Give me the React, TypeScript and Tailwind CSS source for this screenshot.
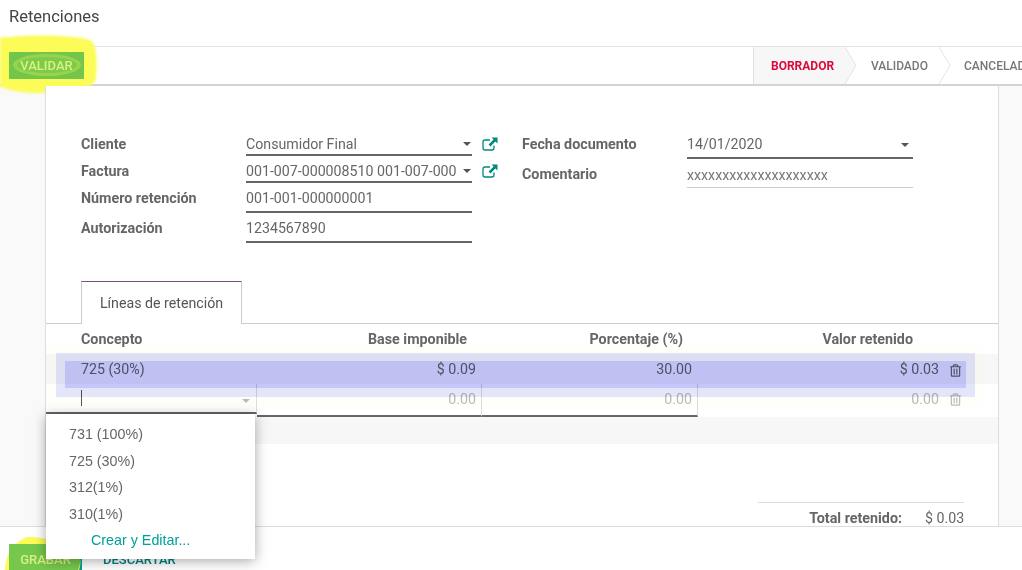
import { FaRegTrashAlt } from 'react-icons/fa';

const caret = 'w-0 h-0 border-x-[4px] border-x-transparent border-t-[4px]';

function ExternalIcon() {
  return (
    <svg viewBox="0 0 16 14" className="w-[16px] h-[14px] shrink-0 text-[#00897f]" fill="none">
      <path d="M8 3H3a2 2 0 0 0-2 2v6a2 2 0 0 0 2 2h7a2 2 0 0 0 2-2V8.5" stroke="currentColor" strokeWidth="1.3" />
      <path d="M9.5.5H15.5V6.5L13.4 4.4 8.4 9.4 6.6 7.6 11.6 2.6Z" fill="currentColor" />
    </svg>
  );
}

function Field({ value, arrow, link, rowClass, fieldClass }: { value: string; arrow?: boolean; link?: boolean; rowClass: string; fieldClass: string }) {
  return (
    <div className={`flex items-start ${rowClass}`}>
      <div className={`w-[226px] flex border-b-2 border-[#666] box-content ${fieldClass}`}>
        <span className="flex-1 overflow-hidden whitespace-nowrap text-[#666] leading-[20px] mr-[7px]">{value}</span>
        {arrow && <span className={`${caret} border-t-[#555] mr-[1px] self-center`} />}
      </div>
      {link && <span className="ml-[10px] mt-[5px]"><ExternalIcon /></span>}
    </div>
  );
}

function Step({ label, active, boxClass }: { label: string; active?: boolean; boxClass: string }) {
  return (
    <div className={`relative h-full flex items-center shrink-0 ${boxClass} ${active ? 'bg-[#f7f7f7]' : ''}`}>
      <span className={`text-[12px] whitespace-nowrap ${active ? 'text-[#dc0a3c] font-bold' : 'text-[#777] font-medium'}`}>{label}</span>
      <svg viewBox="0 0 12 37" className="absolute left-full top-0 w-[12px] h-[37px] z-10">
        <path d="M0 0L11 18.5 0 37" fill={active ? '#f7f7f7' : '#fff'} stroke="#e4e4e4" />
      </svg>
    </div>
  );
}

export default function App() {
  return (
    <div className="relative w-[1022px] h-[570px] overflow-hidden flex flex-col bg-white font-['Roboto',sans-serif] text-[14.2px] text-[#666]">
      {/* title */}
      <div className="h-[47px] shrink-0 border-b border-[#e2e2e2] pl-[9px] pt-[7px] text-[16.5px] leading-[20px] text-[#444]">Retenciones</div>

      {/* toolbar */}
      <div className="relative h-[39px] shrink-0 flex justify-between border-b-2 border-[#d4d4d4]">
        <svg viewBox="0 0 100 62" className="absolute left-0 top-[-12px] w-[100px] h-[62px] blur-[1px]">
          <path d="M-4 3C30-1 75 0 90 5 98 9 97 30 96 44 94 54 70 58 35 58 20 58 5 54-4 50Z" fill="#fcfc58" />
        </svg>
        <div className="relative ml-[9px] mt-[5px] w-[75px] h-[27px] bg-[#72c64c] flex items-center justify-center">
          <svg viewBox="0 0 75 27" className="absolute inset-0 w-[75px] h-[27px]">
            <ellipse cx="38" cy="13" rx="34" ry="11" fill="#9ad44e" />
            <ellipse cx="38" cy="13" rx="30" ry="8" fill="#7ecb4a" />
          </svg>
          <span className="relative text-[13px] font-medium text-[#d9f184]">VALIDAR</span>
        </div>
        <div className="w-[269px] h-[37px] flex overflow-hidden border-l border-[#e0e0e0]">
          <Step label="BORRADOR" active boxClass="w-[91px] pl-[17px]" />
          <Step label="VALIDADO" boxClass="w-[94px] pl-[26px]" />
          <Step label="CANCELADO" boxClass="w-[100px] pl-[25px]" />
        </div>
      </div>

      {/* body */}
      <div className="flex-1 min-h-0 overflow-hidden bg-[#f9f9f9]">
        <div className="relative ml-[45px] w-[954px] h-full bg-white border-x border-[#ddd] pt-[46px]">
          <div className="flex pl-[35px]">
            <div className="flex">
              <div className="w-[165px] font-bold text-[#666] leading-[20px] text-[14.3px]">
                <div className="h-[27px] pt-[2px]">Cliente</div>
                <div className="h-[27px] pt-[2px]">Factura</div>
                <div className="h-[30px] pt-[2px]">Número retención</div>
                <div className="h-[27px] pt-[2px]">Autorización</div>
              </div>
              <div className="w-[276px]">
                <Field value="Consumidor Final" arrow link rowClass="h-[27px]" fieldClass="h-[20px] pt-[2px]" />
                <Field value="001-007-000008510 001-007-000008510" arrow link rowClass="h-[27px]" fieldClass="h-[20px] pt-[2px]" />
                <Field value="001-001-000000001" rowClass="h-[30px]" fieldClass="h-[23px] pt-[2px]" />
                <Field value="1234567890" rowClass="h-[27px]" fieldClass="h-[23px] pt-[2px]" />
              </div>
            </div>
            <div className="flex">
              <div className="w-[165px] font-bold leading-[20px] text-[14.3px]">
                <div className="h-[32px] pt-[2px]">Fecha documento</div>
                <div>Comentario</div>
              </div>
              <div className="w-[226px]">
                <div className="h-[25px] flex items-center border-b-2 border-[#666] box-content">
                  <span className="flex-1">14/01/2020</span>
                  <span className={`${caret} border-t-[#555] mr-[4px]`} />
                </div>
                <div className="h-[22px] flex items-center border-b border-[#ccc] text-[#777] pt-[6px] box-content">xxxxxxxxxxxxxxxxxxxx</div>
              </div>
            </div>
          </div>

          {/* tabs */}
          <div className="mt-[38px] h-[43px] border-b border-[#ccc] pl-[35px]">
            <div className="w-[161px] h-[43px] pt-[2px] bg-white border-x border-[#ccc] border-t border-t-[#75507b] flex items-center justify-center text-[#555]">Líneas de retención</div>
          </div>

          {/* table */}
          <div className="flex h-[30px] pt-[2px] items-center font-bold text-[14.3px] text-[#666]">
            <div className="w-[210px] pl-[35px]">Concepto</div>
            <div className="w-[225px] text-right pr-[14px]">Base imponible</div>
            <div className="w-[216px] text-right pr-[14px]">Porcentaje (%)</div>
            <div className="w-[216px] text-right">Valor retenido</div>
          </div>
          <div className="flex h-[30px] pt-[2px] items-center bg-[#f7f7f7] text-[#666]">
            <div className="w-[210px] pl-[35px]">725 (30%)</div>
            <div className="w-[220px] text-right">$ 0.09</div>
            <div className="w-[216px] text-right">30.00</div>
            <div className="w-[247px] text-right">$ 0.03</div>
            <FaRegTrashAlt className="ml-[11px] w-[11px] h-[13px] text-[#666]" />
          </div>
          <div className="flex h-[33px] text-[#bbb]">
            <div className="relative w-[211px] h-[30px] border-b-2 border-[#666] border-r border-r-[#ddd]">
              <span className="absolute left-[35px] top-[6px] w-px h-[16px] bg-[#555]" />
              <span className={`${caret} border-t-[#bbb] absolute right-[6px] top-[15px]`} />
            </div>
            <div className="w-[225px] h-[33px] border-b-2 border-[#666] border-r border-r-[#ddd] flex items-center justify-end pr-[5px]">0.00</div>
            <div className="w-[216px] h-[33px] border-b-2 border-[#666] border-r border-r-[#ddd] flex items-center justify-end pr-[5px]">0.00</div>
            <div className="w-[241px] h-[31px] flex items-center justify-end">0.00</div>
            <FaRegTrashAlt className="ml-[11px] mt-[9px] w-[11px] h-[13px] text-[#bbb]" />
          </div>
          <div className="h-[27px] bg-[#f7f7f7]" />

          {/* total */}
          <div className="mt-[58px] ml-[712px] w-[206px] border-t border-[#ddd] flex justify-end pt-[5px] leading-[20px]">
            <span className="font-bold text-[14.3px]">Total retenido:</span>
            <span className="ml-[23px] w-[39px] text-right whitespace-nowrap">$ 0.03</span>
          </div>
        </div>
      </div>

      {/* footer */}
      <div className="relative h-[44px] shrink-0 bg-white border-t border-[#ddd] flex items-start pl-[9px] pt-[17px] font-medium text-[13px]">
        <div className="relative w-[73px] h-[32px] bg-[#00a09d] flex items-center justify-center">
          <span className="relative z-20 text-[#d9f184]">GRABAR</span>
        </div>
        <span className="ml-[21px] h-[32px] flex items-center text-[#00837f]">DESCARTAR</span>
        <svg viewBox="0 0 80 33" className="absolute left-[5px] top-[10px] w-[80px] h-[33px] z-10">
          <path d="M0 33C0 20 8 5 22 0 42-1 62 8 75 21 76 26 75 30 74 33Z" fill="#fcfc58" />
          <clipPath id="grabarClip">
            <path d="M4 33V7H68C72 14 75 20 75 24 75 28 74 31 73 33Z" />
          </clipPath>
          <path d="M4 7H75V33H4Z" fill="#76c84c" clipPath="url(#grabarClip)" />
        </svg>
      </div>

      {/* row marker from the screenshot */}
      <div className="absolute left-[46px] top-[344px] w-[938px] h-[62px] bg-[#fefefa] mix-blend-multiply pointer-events-none" />
      <div className="absolute left-[56px] top-[353px] w-[919px] h-[44px] bg-[#e6e6ff] mix-blend-multiply pointer-events-none" />
      <div className="absolute left-[65px] top-[361px] w-[901px] h-[27px] bg-[#dcdeff] mix-blend-multiply pointer-events-none" />

      {/* autocomplete menu */}
      <div className="absolute z-30 left-[46px] top-[414px] w-[209px] h-[145px] bg-white shadow-[0_2px_12px_rgba(0,0,0,0.35)] pt-[7px] font-['Liberation_Sans',sans-serif] text-[14.3px] text-[#666]">
        <div className="h-[26.5px] pl-[23px] leading-[26px]">731 (100%)</div>
        <div className="h-[26.5px] pl-[23px] leading-[26px]">725 (30%)</div>
        <div className="h-[26.5px] pl-[23px] leading-[26px]">312(1%)</div>
        <div className="h-[26.5px] pl-[23px] leading-[26px]">310(1%)</div>
        <div className="h-[26.5px] pl-[45px] leading-[26px] text-[#00a09d]">Crear y Editar...</div>
      </div>
    </div>
  );
}
